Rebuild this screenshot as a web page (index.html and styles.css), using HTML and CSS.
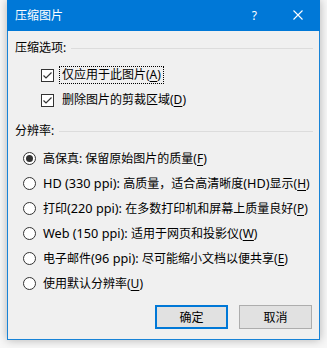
FILE: index.html
```html
<!DOCTYPE html>
<html lang="zh-CN">
<head>
<meta charset="utf-8">
<title>压缩图片</title>
<link rel="stylesheet" href="styles.css">
</head>
<body>
<div class="dialog">
  <div class="titlebar">
    <span class="title">压缩图片</span>
    <span class="help">?</span>
    <span class="close">
      <svg width="10" height="10" viewBox="0 0 10 10"><path d="M0.5 0.5 L9.5 9.5 M9.5 0.5 L0.5 9.5" stroke="#fff" stroke-width="1.1" fill="none"/></svg>
    </span>
  </div>
  <div class="content">
    <div class="legend legend-first"><span>压缩选项:</span><i class="rule"></i></div>
    <div class="row check-row">
      <span class="checkbox"><svg width="11" height="11" viewBox="0 0 11 11"><path d="M1.5 5.5 L4 8 L9.5 2.5" stroke="#333" stroke-width="1.2" fill="none"/></svg></span>
      <span class="label focus">仅应用于此图片(<u>A</u>)</span>
    </div>
    <div class="row check-row">
      <span class="checkbox"><svg width="11" height="11" viewBox="0 0 11 11"><path d="M1.5 5.5 L4 8 L9.5 2.5" stroke="#333" stroke-width="1.2" fill="none"/></svg></span>
      <span class="label">删除图片的剪裁区域(<u>D</u>)</span>
    </div>
    <div class="legend legend-second"><span>分辨率:</span><i class="rule"></i></div>
    <div class="radios">
      <div class="row radio-row"><span class="radio checked"></span><span class="label">高保真: 保留原始图片的质量(<u>F</u>)</span></div>
      <div class="row radio-row"><span class="radio"></span><span class="label"><span class="lat">HD (330 ppi): </span>高质量，适合高清晰度<span class="lat">(HD)</span>显示(<u>H</u>)</span></div>
      <div class="row radio-row"><span class="radio"></span><span class="label">打印<span class="lat">(220 ppi): </span>在多数打印机和屏幕上质量良好(<u>P</u>)</span></div>
      <div class="row radio-row"><span class="radio"></span><span class="label"><span class="lat">Web (150 ppi): </span>适用于网页和投影仪(<u>W</u>)</span></div>
      <div class="row radio-row"><span class="radio"></span><span class="label">电子邮件<span class="lat">(96 ppi): </span>尽可能缩小文档以便共享(<u>E</u>)</span></div>
      <div class="row radio-row"><span class="radio"></span><span class="label">使用默认分辨率(<u>U</u>)</span></div>
    </div>
    <div class="buttons">
      <button class="btn btn-default">确定</button>
      <button class="btn">取消</button>
    </div>
  </div>
</div>
</body>
</html>
```

FILE: styles.css
```css
html, body {
  margin: 0;
  padding: 0;
}
body {
  background: #f7f7f7;
  width: 327px;
  height: 348px;
  overflow: hidden;
  font-family: "Noto Sans", "Noto Sans CJK SC", sans-serif;
  font-size: 12px;
  color: #000;
}
.dialog {
  margin-left: 7px;
  width: 311px;
  height: 339px;
  border: 1px solid #1883d7;
  border-top: 0;
  background: #f0f0f0;
  box-shadow: 0 0 9px rgba(0, 0, 0, 0.28);
  display: flex;
  flex-direction: column;
}
.titlebar {
  height: 31px;
  background: #0078d7;
  color: #fff;
  display: flex;
  align-items: center;
  padding-left: 7px;
  padding-right: 17px;
  margin: 0 -1px;
  box-sizing: border-box;
  padding-bottom: 1px;
}
.title {
  flex: 1;
  font-size: 12px;
  padding-left: 1px;
}
.help {
  font-size: 12px;
  margin-right: 36px;
}
.close {
  display: flex;
  width: 10px;
  height: 10px;
}
.content {
  display: flex;
  flex-direction: column;
  padding: 0 6px 0 7px;
}
.legend {
  display: flex;
  align-items: center;
  height: 16px;
  line-height: 16px;
}
.legend-first {
  margin-top: 9px;
  margin-bottom: 6px;
}
.legend-second {
  margin-top: 11px;
  margin-bottom: 7px;
}
.rule {
  flex: 1;
  height: 1px;
  background: #dcdcdc;
  margin-left: 5px;
  margin-top: 1px;
}
.row {
  display: flex;
  align-items: center;
  height: 25px;
}
.check-row {
  padding-left: 26px;
}
.checkbox {
  width: 11px;
  height: 11px;
  border: 1px solid #333;
  background: #fff;
  display: flex;
  margin-right: 5px;
  margin-top: 1px;
}
.check-row .label {
  padding: 0 2px;
  height: 16px;
  line-height: 16px;
  border: 1px dotted transparent;
}
.check-row .label.focus {
  border-color: #000;
}
.radio-row {
  padding-left: 8px;
}
.radio {
  width: 11px;
  height: 11px;
  border: 1px solid #333;
  border-radius: 50%;
  background: #fff;
  margin-right: 7px;
  display: flex;
  align-items: center;
  justify-content: center;
}
.radio.checked::after {
  content: "";
  width: 7px;
  height: 7px;
  border-radius: 50%;
  background: #333;
}
.radio-row .label {
  line-height: 16px;
  white-space: nowrap;
}
.lat {
  font-size: 12.7px;
}
u {
  text-decoration: underline;
  text-underline-offset: 2px;
}
.buttons {
  display: flex;
  justify-content: flex-end;
  gap: 11px;
  margin-top: 9px;
  padding-right: 1px;
}
.btn {
  width: 73px;
  height: 24px;
  box-sizing: border-box;
  background: #e1e1e1;
  border: 1px solid #adadad;
  font-family: "Noto Sans", "Noto Sans CJK SC", sans-serif;
  font-size: 12px;
  color: #000;
  padding: 0;
  margin: 0;
}
.btn-default {
  border: 2px solid #0078d7;
}
```
